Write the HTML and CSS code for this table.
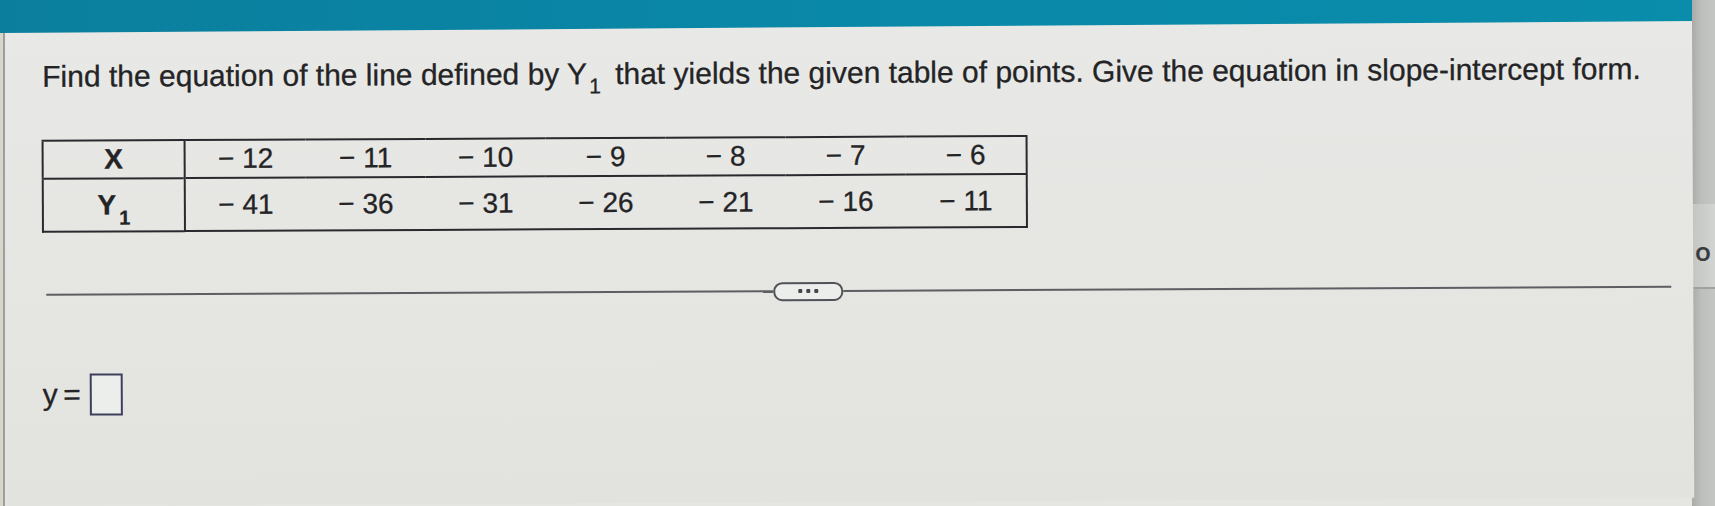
FILE: index.html
```html
<!DOCTYPE html>
<html>
<head>
<meta charset="utf-8">
<link rel="stylesheet" href="styles.css">
</head>
<body>
<div class="screen">
  <div class="window">
    <div class="topbar"></div>
    <div class="main">
      <div class="gutter"></div>
      <div class="panel">
        <p class="question">Find the equation of the line defined by Y<sub>1</sub> that yields the given table of points. Give the equation in slope-intercept form.</p>
        <table class="points">
          <tr class="row-x">
            <th class="head">X</th>
            <td>− 12</td><td>− 11</td><td>− 10</td><td>− 9</td><td>− 8</td><td>− 7</td><td>− 6</td>
          </tr>
          <tr class="row-y">
            <th class="head">Y<sub>1</sub></th>
            <td>− 41</td><td>− 36</td><td>− 31</td><td>− 26</td><td>− 21</td><td>− 16</td><td>− 11</td>
          </tr>
        </table>
        <div class="divider">
          <div class="rule rule-left"></div>
          <div class="more"><span></span><span></span><span></span></div>
          <div class="rule rule-right"></div>
        </div>
        <div class="answer">
          <span class="lhs">y =</span>
          <span class="box"></span>
        </div>
      </div>
    </div>
  </div>
  <div class="side">
    <div class="side-band"><span class="side-label">O</span></div>
  </div>
</div>
</body>
</html>
```
FILE: styles.css
```css
html, body {
  margin: 0;
  padding: 0;
}
body {
  width: 1715px;
  height: 506px;
  overflow: hidden;
  background: #e2e3df;
  font-family: "Liberation Sans", Arial, sans-serif;
  color: #242426;
}
.screen {
  display: flex;
  height: 506px;
}
.window {
  flex: 1;
  display: flex;
  flex-direction: column;
  background: #e5e6e2;
}
.topbar {
  height: 33px;
  flex: none;
  background: linear-gradient(90deg, #0b7e9d 0%, #0a88a8 50%, #0a8cab 100%);
  clip-path: polygon(0 0, 100% 0, 100% 21px, 0 33px);
  margin-bottom: -3px;
  position: relative;
  z-index: 1;
}
.main {
  flex: 1;
  display: flex;
}
.gutter {
  width: 3px;
  background: #d9d6c8;
  border-right: 2px solid #9c9ea2;
  flex: none;
}
.panel {
  flex: 1;
  background: linear-gradient(180deg, #e8e9e6 0%, #e5e6e2 60%, #e2e3df 100%);
  padding: 0 22px 0 36px;
  transform: rotate(-0.28deg);
  transform-origin: 0 0;
  -webkit-text-stroke: 0.3px #242426;
}
.question {
  margin: 29px 0 0 1px;
  font-size: 30px;
  line-height: 35px;
  white-space: nowrap;
}
.question sub {
  font-size: 21px;
  vertical-align: -9px;
  line-height: 0;
  margin-left: 2px;
  margin-right: 6px;
}
.points {
  margin-top: 46px;
  border-collapse: collapse;
  border: 2px solid #2a2a2e;
}
.points th, .points td {
  border-top: 2px solid #2a2a2e;
  padding: 0;
  text-align: center;
  font-size: 28px;
  font-weight: normal;
}
.row-x th, .row-x td {
  height: 36px;
}
.row-y th, .row-y td {
  height: 51px;
}
.points td {
  width: 120px;
}
.points th.head {
  width: 140px;
  border-right: 2px solid #2a2a2e;
  font-weight: bold;
  font-size: 28px;
}
.points th sub {
  font-size: 20px;
  line-height: 0;
  vertical-align: -10px;
  margin-left: 3px;
}
.divider {
  display: flex;
  align-items: center;
  margin-top: 52px;
  margin-left: 4px;
  height: 20px;
}
.rule {
  height: 2px;
  background: #5c5e62;
}
.rule-left {
  width: 727px;
}
.rule-right {
  flex: 1;
}
.more {
  width: 66px;
  height: 15px;
  border: 2px solid #505257;
  border-radius: 9px;
  background: #eceeeb;
  display: flex;
  justify-content: center;
  align-items: center;
  gap: 4px;
}
.more span {
  width: 4px;
  height: 4px;
  border-radius: 1px;
  background: #45474d;
}
.answer {
  display: flex;
  align-items: flex-end;
  gap: 9px;
  margin-top: 69px;
  margin-left: 0;
}
.lhs {
  font-size: 30px;
  line-height: 32px;
  margin-bottom: 5px;
  word-spacing: -3px;
}
.box {
  flex: none;
  width: 29px;
  height: 38px;
  border: 2px solid #3d3f5a;
  background: #eceeec;
}
.side {
  width: 23px;
  flex: none;
  background: linear-gradient(90deg, #a9aba9 0%, #bdbfbd 40%, #c4c6c4 100%);
  padding-top: 204px;
}
.side-band {
  height: 85px;
  background: linear-gradient(90deg, #c3c5c3 0%, #d3d5d3 100%);
  border-bottom: 2px solid #a0a2a0;
  padding-top: 40px;
  box-sizing: border-box;
}
.side-label {
  display: block;
  font-family: "Open Sans", sans-serif;
  font-weight: bold;
  font-size: 20px;
  line-height: 20px;
  color: #3a3c40;
  padding-left: 3px;
  white-space: nowrap;
}
```
